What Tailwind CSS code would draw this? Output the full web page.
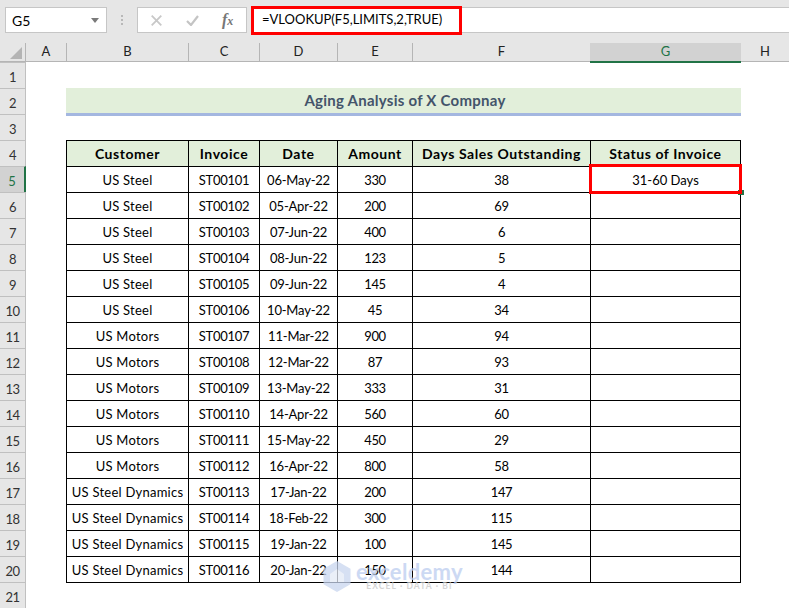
<!DOCTYPE html>
<html lang="en">
<head>
    <meta charset="UTF-8">
    <title>Aging Analysis</title>
    <script src="https://cdn.jsdelivr.net/npm/@tailwindcss/browser@4"></script>
</head>
<body class="w-[789px] h-[608px] overflow-hidden bg-white font-['Lato',sans-serif] text-[13px] text-black">
    <!-- formula bar -->
    <div class="h-[43px] bg-[#e6e6e6] pt-[7px]">
        <div class="h-[26px] flex items-stretch">
            <div class="ml-[5px] w-[102px] bg-white border border-[#c6c6c6] flex items-center justify-between pl-[6px] pr-[6px] text-[14px]">
                <span>G5</span>
                <svg width="9" height="5" viewBox="0 0 9 5"><path d="M0 0h8L4 5z" fill="#7a7a7a"/></svg>
            </div>
            <div class="w-[30px] flex flex-col items-center justify-center gap-[2px]">
                <i class="w-[2px] h-[2px] bg-[#b8b8b8]"></i>
                <i class="w-[2px] h-[2px] bg-[#b8b8b8]"></i>
                <i class="w-[2px] h-[2px] bg-[#b8b8b8]"></i>
            </div>
            <div class="w-[110px] bg-white border border-[#c6c6c6] flex items-center pl-[13px]">
                <svg width="11" height="11" viewBox="0 0 11 11"><path d="M.7.7l9.600 9.600M10.300.7L.7 10.300" stroke="#c8c8c8" stroke-width="1.800" fill="none"/></svg>
                <svg class="ml-[24px]" width="13" height="11" viewBox="0 0 13 11"><path d="M1 6l4 4 7-9" stroke="#c4c4c4" stroke-width="2.200" fill="none"/></svg>
                <span class="ml-[23px] font-['Liberation_Serif',serif] italic font-bold text-[16px] leading-none text-[#777]">f<span class="text-[12px]">x</span></span>
            </div>
            <div class="ml-[4px] flex-1 bg-white border-y border-[#c6c6c6] flex items-center pl-[11px]">=VLOOKUP(F5,LIMITS,2,TRUE)</div>
        </div>
    </div>

    <!-- sheet -->
    <div id="sheet" class="grid grid-cols-[26px_40px_122px_71px_78px_75px_178px_151px_48px] grid-rows-[19px_repeat(21,26px)]"></div>

    <!-- annotations -->
    <div class="absolute left-[738px] top-[190px] w-[6px] h-[5px] bg-[#217346]"></div>
    <div class="absolute left-[251px] top-[6px] w-[211px] h-[29px] border-[3px] border-[#ff0000]"></div>
    <div class="absolute left-[589px] top-[164px] w-[153px] h-[30px] border-[3px] border-[#ff0000]"></div>

    <!-- watermark -->
    <div class="absolute left-[323px] top-[561px] flex items-start gap-[5px] opacity-75">
        <svg width="28" height="31" viewBox="0 0 28 31"><path d="M14 0l13.500 7.700v15.600L14 31 .5 23.300V7.700z" fill="#c9d6ef"/><path d="M14 8l7 5v8H7v-8z" fill="#e4eaf6"/></svg>
        <div class="flex flex-col items-center leading-none">
            <span class="text-[22px] font-bold tracking-[0.3px] text-[#bccdf0] leading-[21px]">exceldemy</span>
            <span class="text-[8.500px] font-bold tracking-[1.100px] text-[#c8c8c8] leading-[8px]">EXCEL · DATA · BI</span>
        </div>
    </div>

    <script>
        const data = [
            ['US Steel', 'ST00101', '06-May-22', 330, 38],
            ['US Steel', 'ST00102', '05-Apr-22', 200, 69],
            ['US Steel', 'ST00103', '07-Jun-22', 400, 6],
            ['US Steel', 'ST00104', '08-Jun-22', 123, 5],
            ['US Steel', 'ST00105', '09-Jun-22', 145, 4],
            ['US Steel', 'ST00106', '10-May-22', 45, 34],
            ['US Motors', 'ST00107', '11-Mar-22', 900, 94],
            ['US Motors', 'ST00108', '12-Mar-22', 87, 93],
            ['US Motors', 'ST00109', '13-May-22', 333, 31],
            ['US Motors', 'ST00110', '14-Apr-22', 560, 60],
            ['US Motors', 'ST00111', '15-May-22', 450, 29],
            ['US Motors', 'ST00112', '16-Apr-22', 800, 58],
            ['US Steel Dynamics', 'ST00113', '17-Jan-22', 200, 147],
            ['US Steel Dynamics', 'ST00114', '18-Feb-22', 300, 115],
            ['US Steel Dynamics', 'ST00115', '19-Jan-22', 100, 145],
            ['US Steel Dynamics', 'ST00116', '20-Jan-22', 150, 144],
        ];
        const headers = ['Customer', 'Invoice', 'Date', 'Amount', 'Days Sales Outstanding', 'Status of Invoice'];
        const tracking = ['tracking-[0.25px]', 'tracking-[-0.3px]', 'tracking-[-0.2px]', 'tracking-[-0.4px]', 'tracking-[-0.4px]'];
        const colHead = 'flex items-center justify-center bg-[#e6e6e6] border-l border-b border-[#b5b5b5] text-[#222]';
        const rowHead = 'flex items-center justify-center bg-[#e6e6e6] border-r border-t border-[#c0c0c0] text-[#333] tracking-[-0.5px] pt-[5px]';
        const cell = 'flex items-center justify-center border-l border-t border-black whitespace-nowrap pt-[2px]';
        const hdrCell = 'flex items-center justify-center border-l border-t border-black bg-[#e2efda] font-bold text-[14px] tracking-[0.55px] whitespace-nowrap';

        let html = `<div class="flex items-end justify-end pr-[3px] pb-[2px] bg-[#e6e6e6] border-r border-b border-[#b5b5b5]"><svg width="12" height="12" viewBox="0 0 12 12"><path d="M12 0v12H0z" fill="#b4b4b4"/></svg></div>`;
        html += `<div class="flex items-center justify-center bg-[#e6e6e6] border-b border-[#b5b5b5] text-[#222]">A</div>`;
        ['B', 'C', 'D', 'E', 'F'].forEach(c => html += `<div class="${colHead}">${c}</div>`);
        html += `<div class="h-[20px] self-start flex items-center justify-center bg-[#d2d2d2] border-b-2 border-[#217346] text-[#217346]">G</div>`;
        html += `<div class="flex items-center justify-center bg-[#e6e6e6] border-b border-[#b5b5b5] text-[#222]">H</div>`;

        const blank = '<div></div>';
        const rowNo = (n) => n === 5
            ? `<div class="flex items-center justify-center bg-[#d2d2d2] border-r-2 border-[#217346] border-t border-t-[#c0c0c0] text-[#217346] pt-[5px]">5</div>`
            : `<div class="${rowHead}">${n}</div>`;

        for (let r = 1; r <= 21; r++) {
            html += rowNo(r) + blank;
            if (r === 2) {
                html += `<div class="col-span-6 h-[28px] self-start flex items-center justify-center bg-[#e2efda] border-b-[3px] border-[#a4b7e0] font-bold text-[15px] tracking-[0.25px] text-[#44546a] pl-[3px]">Aging Analysis of X Compnay</div>` + blank;
            } else if (r === 4) {
                headers.forEach((h, i) => html += `<div class="${hdrCell}${i === 5 ? ' border-r' : ''}">${h}</div>`);
                html += blank;
            } else if (r >= 5 && r <= 20) {
                data[r - 5].forEach((v, i) => html += `<div class="${cell} ${tracking[i]}">${v}</div>`);
                html += `<div class="${cell} border-r">${r === 5 ? '31-60 Days' : ''}</div>` + blank;
            } else if (r === 21) {
                html += `<div class="col-span-6 border-t border-black"></div>` + blank;
            } else {
                html += `<div class="col-span-6"></div>` + blank;
            }
        }
        document.getElementById('sheet').innerHTML = html;
    </script>
</body>
</html>
